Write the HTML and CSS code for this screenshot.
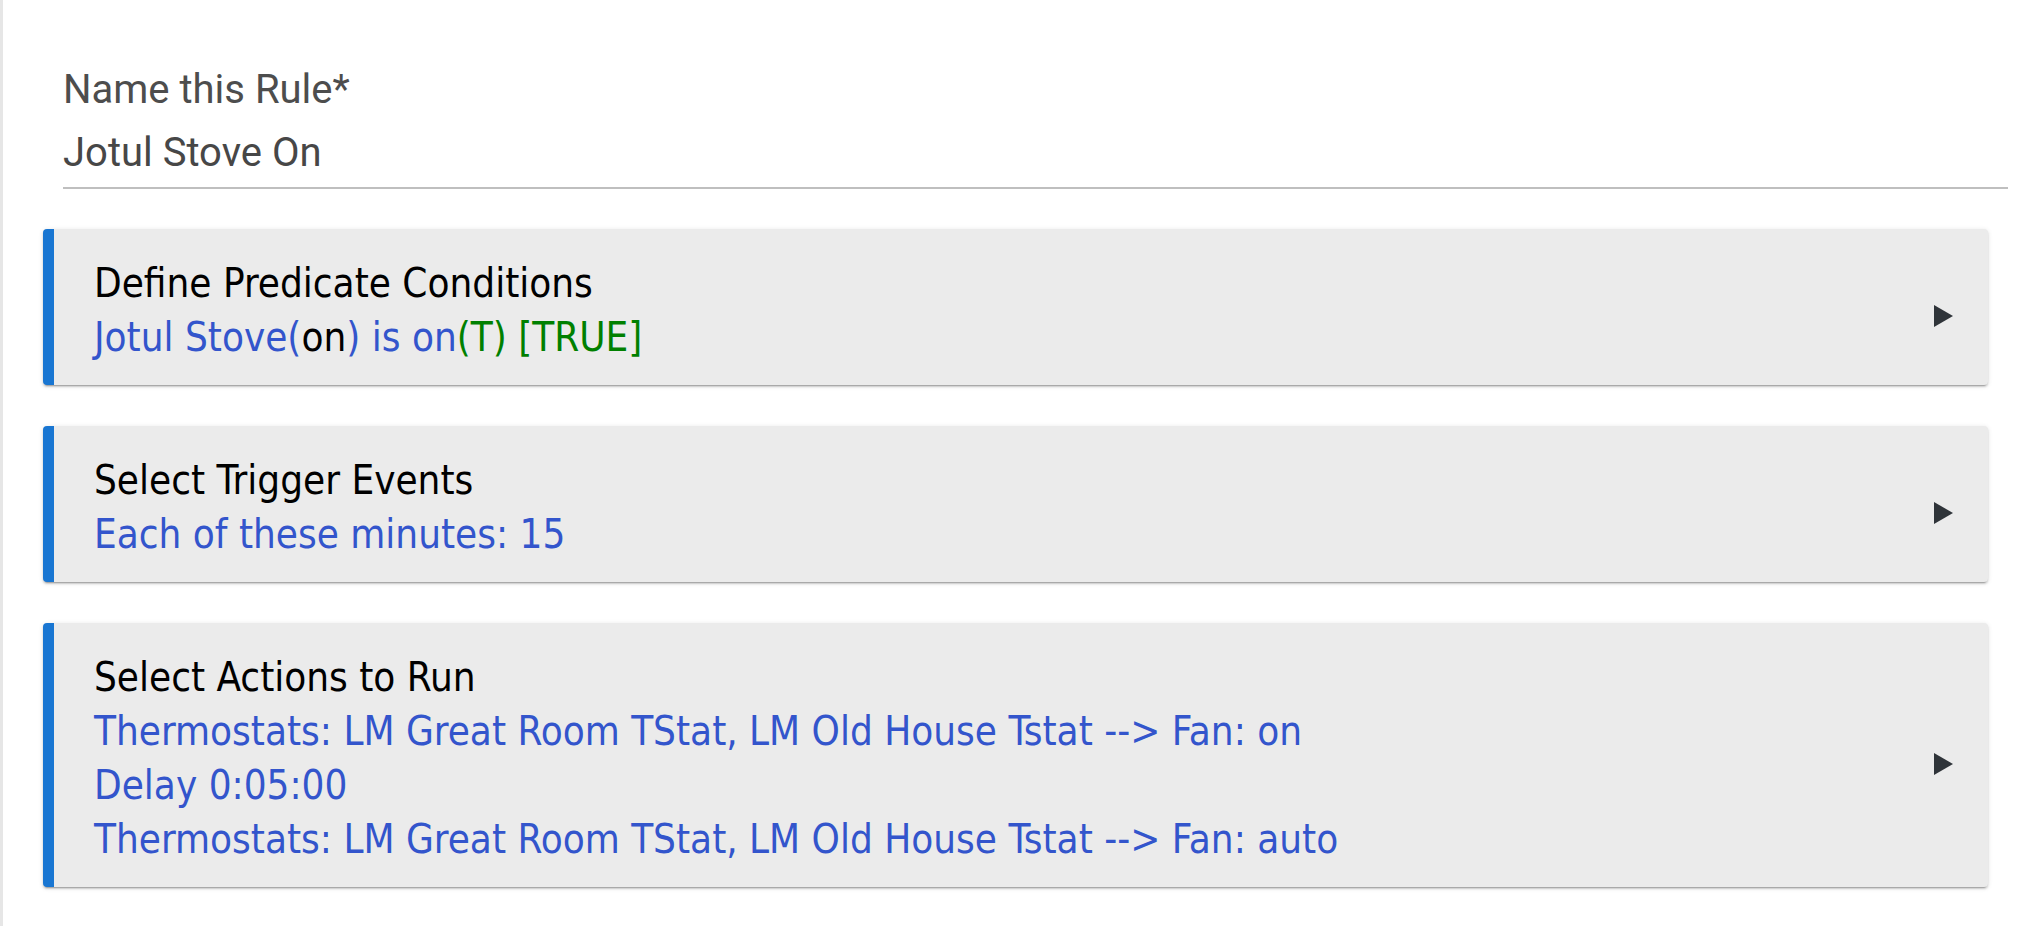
FILE: index.html
```html
<!DOCTYPE html>
<html lang="en">
<head>
  <meta charset="UTF-8">
  <title>Jotul Stove On</title>
  <meta name="viewport" content="width=device-width, initial-scale=1.0">
  <link rel="stylesheet" href="styles.css">
</head>
<body>
  <div class="page">
    <div class="field">
      <label class="field-label" for="rule-name">Name this Rule*</label>
      <div class="field-value" id="rule-name">Jotul Stove On</div>
    </div>

    <!-- predicate -->
    <div class="section">
      <div class="section-body">
        <div class="section-title">Define Predicate Conditions</div>
        <div class="line">Jotul Stove(<span class="dark">on</span>) is on<span class="ok">(T) [TRUE]</span></div>
      </div>
      <svg class="arrow" width="19" height="22" viewBox="0 0 19 22"><path d="M0 0 L19 11 L0 22 Z"/></svg>
    </div>

    <!-- triggers -->
    <div class="section">
      <div class="section-body">
        <div class="section-title">Select Trigger Events</div>
        <div class="line">Each of these minutes: 15</div>
      </div>
      <svg class="arrow" width="19" height="22" viewBox="0 0 19 22"><path d="M0 0 L19 11 L0 22 Z"/></svg>
    </div>

    <!-- actions -->
    <div class="section">
      <div class="section-body">
        <div class="section-title">Select Actions to Run</div>
        <div class="line">Thermostats: LM Great Room TStat, LM Old House Tstat --&gt; Fan: on</div>
        <div class="line">Delay 0:05:00</div>
        <div class="line">Thermostats: LM Great Room TStat, LM Old House Tstat --&gt; Fan: auto</div>
      </div>
      <svg class="arrow" width="19" height="22" viewBox="0 0 19 22"><path d="M0 0 L19 11 L0 22 Z"/></svg>
    </div>
  </div>
</body>
</html>
```

FILE: styles.css
```css
body {
  margin: 0;
  background: #fff;
  font-family: "DejaVu Sans Condensed", "DejaVu Sans", sans-serif;
  font-stretch: condensed;
}

.page {
  min-height: 100vh;
  box-sizing: border-box;
  border-left: 3px solid #e6e6e6;
  padding: 66px 43px 40px 40px;
}

.field {
  margin: 0 -20px 0 20px;
  border-bottom: 2px solid #bfbfbf;
  padding-bottom: 10px;
  font-family: Roboto, "Liberation Sans", sans-serif;
  font-stretch: normal;
  font-size: 40px;
  line-height: 48px;
  color: #4d4d4d;
}

.field-label {
  display: block;
  margin-bottom: 15px;
}

.field-value {
  color: #474747;
}

.section {
  display: flex;
  align-items: center;
  margin-top: 40px;
  background: #ebebeb;
  border-left: 11px solid #1976d2;
  border-radius: 4px;
  padding: 27px 35px 21px 40px;
  box-shadow: 0 2px 2px 0 rgba(0,0,0,0.14), 0 3px 1px -2px rgba(0,0,0,0.2), 0 1px 5px 0 rgba(0,0,0,0.12);
}

.section + .section {
  margin-top: 41px;
}

.section-body {
  flex: 1;
  font-size: 40px;
  line-height: 54px;
}

.section-title {
  color: #000;
}

.line {
  color: #3355cc;
}

.dark {
  color: #000;
}

.ok {
  color: #008000;
}

.arrow {
  margin-top: 12px;
  fill: #2f3439;
}
```
